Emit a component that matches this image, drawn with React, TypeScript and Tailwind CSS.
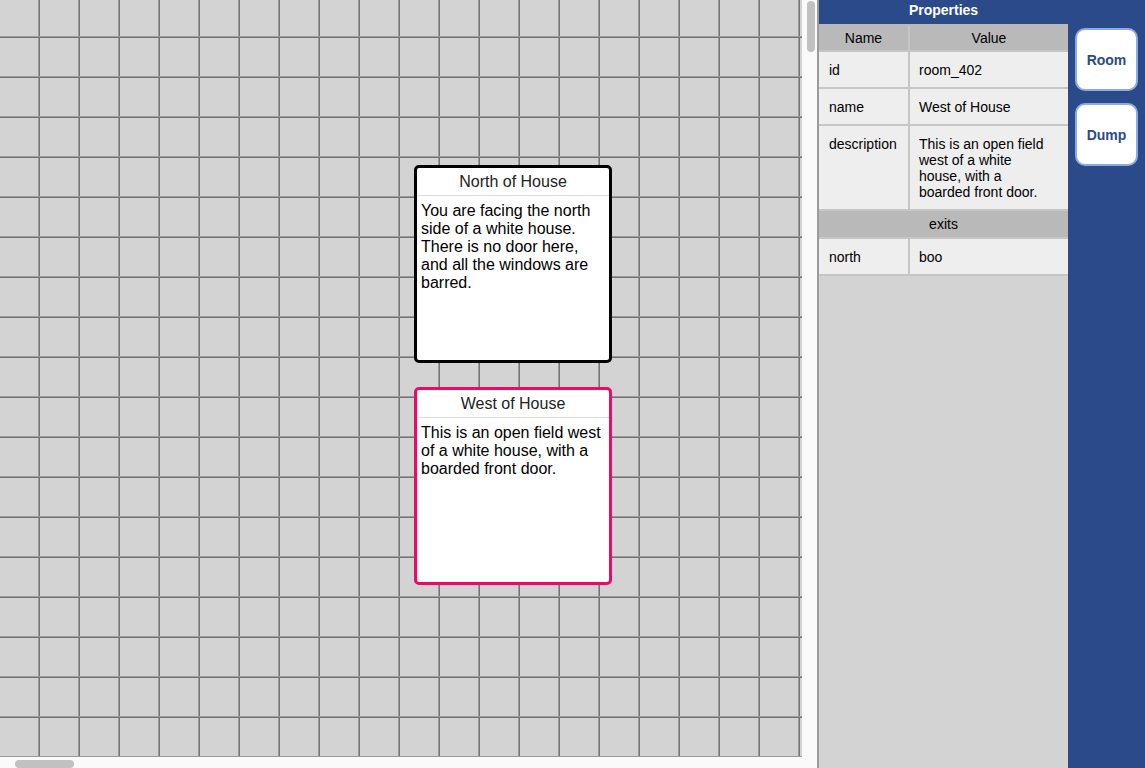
const font = "font-['Liberation_Sans',Arial,sans-serif]";

function GridBackground() {
  return (
    <svg className="absolute inset-0 h-full w-full" aria-hidden>
      <defs>
        <pattern id="grid" x="38" y="36" width="40" height="40" patternUnits="userSpaceOnUse">
          <rect x="0" y="0" width="1" height="40" fill="#9a9a9a" />
          <rect x="1" y="0" width="1" height="40" fill="#737373" />
          <rect x="0" y="0" width="40" height="1" fill="#9a9a9a" />
          <rect x="0" y="1" width="40" height="1" fill="#737373" />
        </pattern>
      </defs>
      <rect width="100%" height="100%" fill="#d3d3d3" />
      <rect width="100%" height="100%" fill="url(#grid)" />
    </svg>
  );
}

function RoomCard({
  title,
  text,
  top,
  selected,
}: {
  title: string;
  text: string;
  top: string;
  selected?: boolean;
}) {
  return (
    <div
      className={`absolute left-[414px] ${top} flex h-[198px] w-[198px] flex-col rounded-[5px] border-[3px] bg-white ${
        selected ? "border-[#ec0a66]" : "border-black"
      }`}
    >
      <div className="flex h-[28px] items-center justify-center border-b border-[#dedede] text-[16px] text-[#222]">
        {title}
      </div>
      <div className="px-[4px] pt-[6px] text-[16px] leading-[18px] text-black">{text}</div>
    </div>
  );
}

function Row({ name, value }: { name: string; value: string }) {
  return (
    <div className="grid grid-cols-[91px_1fr] border-b-2 border-[#c6c6c6] bg-[#eeeeee] text-[14px] leading-[16px] text-black">
      <div className="border-r-2 border-[#c6c6c6] pl-[10px] pr-[6px] pt-[10px] pb-[9px]">{name}</div>
      <div className="pl-[9px] pr-[20px] pt-[10px] pb-[9px]">{value}</div>
    </div>
  );
}

export default function App() {
  return (
    <div className={`flex h-[768px] w-[1145px] overflow-hidden ${font}`}>
      {/* canvas */}
      <div className="flex w-[817px] flex-col bg-[#fafafa]">
        <div className="flex flex-1">
          <div className="relative flex-1 overflow-hidden">
            <GridBackground />
            <RoomCard
              title="North of House"
              text="You are facing the north side of a white house. There is no door here, and all the windows are barred."
              top="top-[165px]"
            />
            <RoomCard
              title="West of House"
              text="This is an open field west of a white house, with a boarded front door."
              top="top-[387px]"
              selected
            />
          </div>
          <div className="w-[15px] bg-[#fafafa] pl-[5px] pt-[1px]">
            <div className="h-[51px] w-[8px] rounded-full bg-[#c1c1c1]" />
          </div>
        </div>
        <div className="h-[11px] bg-[#fafafa] pl-[15px] pt-[3px]">
          <div className="h-[8px] w-[59px] rounded-full bg-[#c1c1c1]" />
        </div>
      </div>

      {/* properties */}
      <div className="flex w-[251px] flex-col border-l-2 border-[#9a9a9a] bg-[#d3d3d3]">
        <div className="flex h-[24px] items-center justify-center bg-[#2b4a8a] pb-[4px] text-[14px] font-bold text-white">
          Properties
        </div>
        <div className="grid h-[28px] grid-cols-[91px_1fr] border-b-2 border-[#c6c6c6] bg-[#b9b9b9] pt-[2px] text-[14px] text-black">
          <div className="flex items-center justify-center border-r-2 border-[#c6c6c6]">Name</div>
          <div className="flex items-center justify-center">Value</div>
        </div>
        <Row name="id" value="room_402" />
        <Row name="name" value="West of House" />
        <Row name="description" value="This is an open field west of a white house, with a boarded front door." />
        <div className="flex h-[28px] items-center justify-center border-b-2 border-[#c6c6c6] bg-[#b9b9b9] text-[14px] text-black">
          exits
        </div>
        <Row name="north" value="boo" />
      </div>

      {/* toolbar */}
      <div className="flex flex-1 flex-col items-center gap-[12px] bg-[#2b4a89] pt-[28px]">
        {["Room", "Dump"].map((label) => (
          <button
            key={label}
            className="flex h-[63px] w-[63px] items-center justify-center rounded-[10px] border-2 border-[#8eaae6] bg-white pt-[1px] text-[14px] font-bold text-[#2b4a89]"
          >
            {label}
          </button>
        ))}
      </div>
    </div>
  );
}
